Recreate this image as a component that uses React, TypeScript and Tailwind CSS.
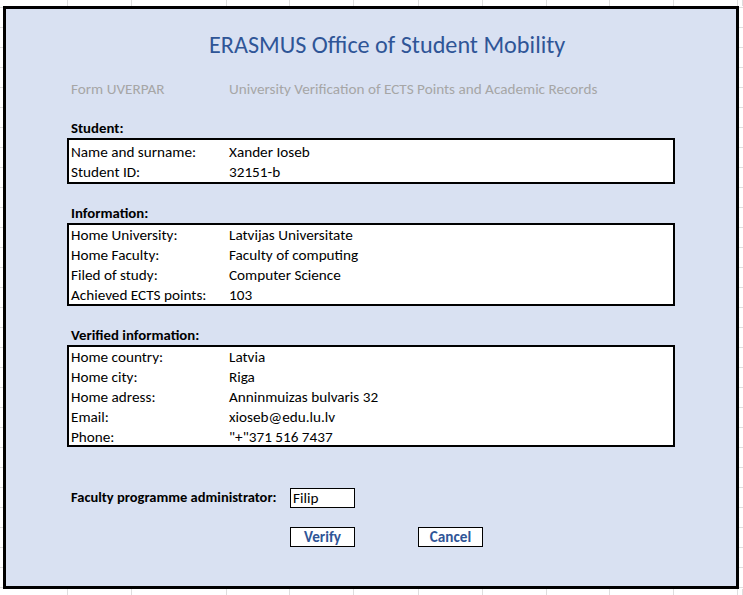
import React from "react";

const font = "font-['Calibri','Carlito','Lato',sans-serif]";

// column widths of the sheet grid, as seen in the strips around the form
const cols = [68, 64, 95, 63, 64, 65, 64, 64, 63, 64, 64, 5];

function GridStrip() {
  return (
    <div className="flex h-[6px] shrink-0">
      {cols.map((w, i) => (
        <div key={i} className="h-full shrink-0 border-r border-[#dedede]" style={{ width: w }} />
      ))}
    </div>
  );
}

type Row = [string, string];

function DataBox(props: { rows: Row[]; height: string; pad?: string }) {
  return (
    <div className={`ml-[61px] w-[608px] ${props.height} ${props.pad ?? ""} shrink-0 border-2 border-black bg-white`}>
      {props.rows.map(([label, value]) => (
        <div key={label} className="flex h-[20px] items-center pl-[2px]">
          <span className="w-[158px] shrink-0">{label}</span>
          <span>{value}</span>
        </div>
      ))}
    </div>
  );
}

function SectionLabel(props: { children: React.ReactNode; mt: string }) {
  return (
    <div className={`${props.mt} flex h-[20px] shrink-0 items-center pl-[65px] text-[14.8px] font-bold`}>
      {props.children}
    </div>
  );
}

export default function App() {
  const student: Row[] = [
    ["Name and surname:", "Xander Ioseb"],
    ["Student ID:", "32151-b"],
  ];
  const info: Row[] = [
    ["Home University:", "Latvijas Universitate"],
    ["Home Faculty:", "Faculty of computing"],
    ["Filed of study:", "Computer Science"],
    ["Achieved ECTS points:", "103"],
  ];
  const verified: Row[] = [
    ["Home country:", "Latvia"],
    ["Home city:", "Riga"],
    ["Home adress:", "Anninmuizas bulvaris 32"],
    ["Email:", "xioseb@edu.lu.lv"],
    ["Phone:", "\"+\"371 516 7437"],
  ];

  return (
    <div
      className={`${font} flex h-[595px] w-[743px] flex-col overflow-hidden bg-white bg-[repeating-linear-gradient(to_bottom,transparent_0_7px,#dedede_7px_8px,transparent_8px_20px)] text-[15.2px] text-black`}
    >
      <GridStrip />
      <div className="ml-[3px] mr-[4px] flex h-[583px] shrink-0 flex-col border-[3px] border-black bg-[#D9E1F2]">
        <div className="mt-[21px] h-[30px] shrink-0 pl-[203px] text-[24.2px] leading-[30px] text-[#2F5597]">
          ERASMUS Office of Student Mobility
        </div>

        <div className="mt-[19px] flex h-[20px] shrink-0 items-center pl-[65px] text-[#A6A6A6]">
          <span className="w-[158px] shrink-0">Form UVERPAR</span>
          <span>University Verification of ECTS Points and Academic Records</span>
        </div>

        <SectionLabel mt="mt-[19px]">Student:</SectionLabel>
        <DataBox rows={student} height="h-[46px]" pad="pt-[2px]" />

        <SectionLabel mt="mt-[19px]">Information:</SectionLabel>
        <DataBox rows={info} height="h-[83px]" />

        <SectionLabel mt="mt-[19px]">Verified information:</SectionLabel>
        <DataBox rows={verified} height="h-[102px]" />

        <div className="mt-[41px] flex h-[20px] shrink-0 items-center pl-[65px]">
          <span className="w-[219px] shrink-0 text-[14.5px] font-bold">Faculty programme administrator:</span>
          <div className="flex h-[20px] w-[65px] items-center border border-black bg-white pl-[2px]">Filip</div>
        </div>

        <div className="mt-[19px] flex h-[20px] shrink-0 pl-[284px]">
          <button className="flex h-[20px] w-[65px] items-center justify-center border border-black bg-white font-bold text-[#2F5597]">
            Verify
          </button>
          <button className="ml-[63px] flex h-[20px] w-[65px] items-center justify-center border border-black bg-white font-bold text-[#2F5597]">
            Cancel
          </button>
        </div>
      </div>
      <GridStrip />
    </div>
  );
}
